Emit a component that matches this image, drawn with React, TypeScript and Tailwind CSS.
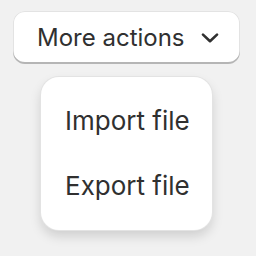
export default function App() {
    return (
        <div className="w-[256px] h-[256px] bg-[#f1f1f1] font-['Inter',sans-serif] text-[#303030] pt-[11px] pl-[13px]">
            <button className="flex items-center h-[53px] w-[227px] pl-[24px] gap-[16px] bg-white rounded-[12px] shadow-[inset_0_-2px_0_0_#b5b5b5,inset_0_0_0_1px_#e3e3e3]">
                <span className="text-[24px] leading-none">More actions</span>
                <svg width="18" height="10" viewBox="0 0 18 10" fill="none" stroke="currentColor" strokeWidth="2.6" strokeLinecap="round" strokeLinejoin="round">
                    <path d="M2 1.6 9 8.2 16 1.6" />
                </svg>
            </button>
            <div className="ml-[28px] mt-[13px] w-[171px] h-[153px] bg-white rounded-[18px] shadow-[0_0_0_1px_#e3e3e3,0_6px_12px_rgba(0,0,0,0.15)] flex flex-col gap-[39px] pt-[31px] pl-[24px]">
                <span className="text-[26px] leading-none">Import file</span>
                <span className="text-[26px] leading-none">Export file</span>
            </div>
        </div>
    )
}
